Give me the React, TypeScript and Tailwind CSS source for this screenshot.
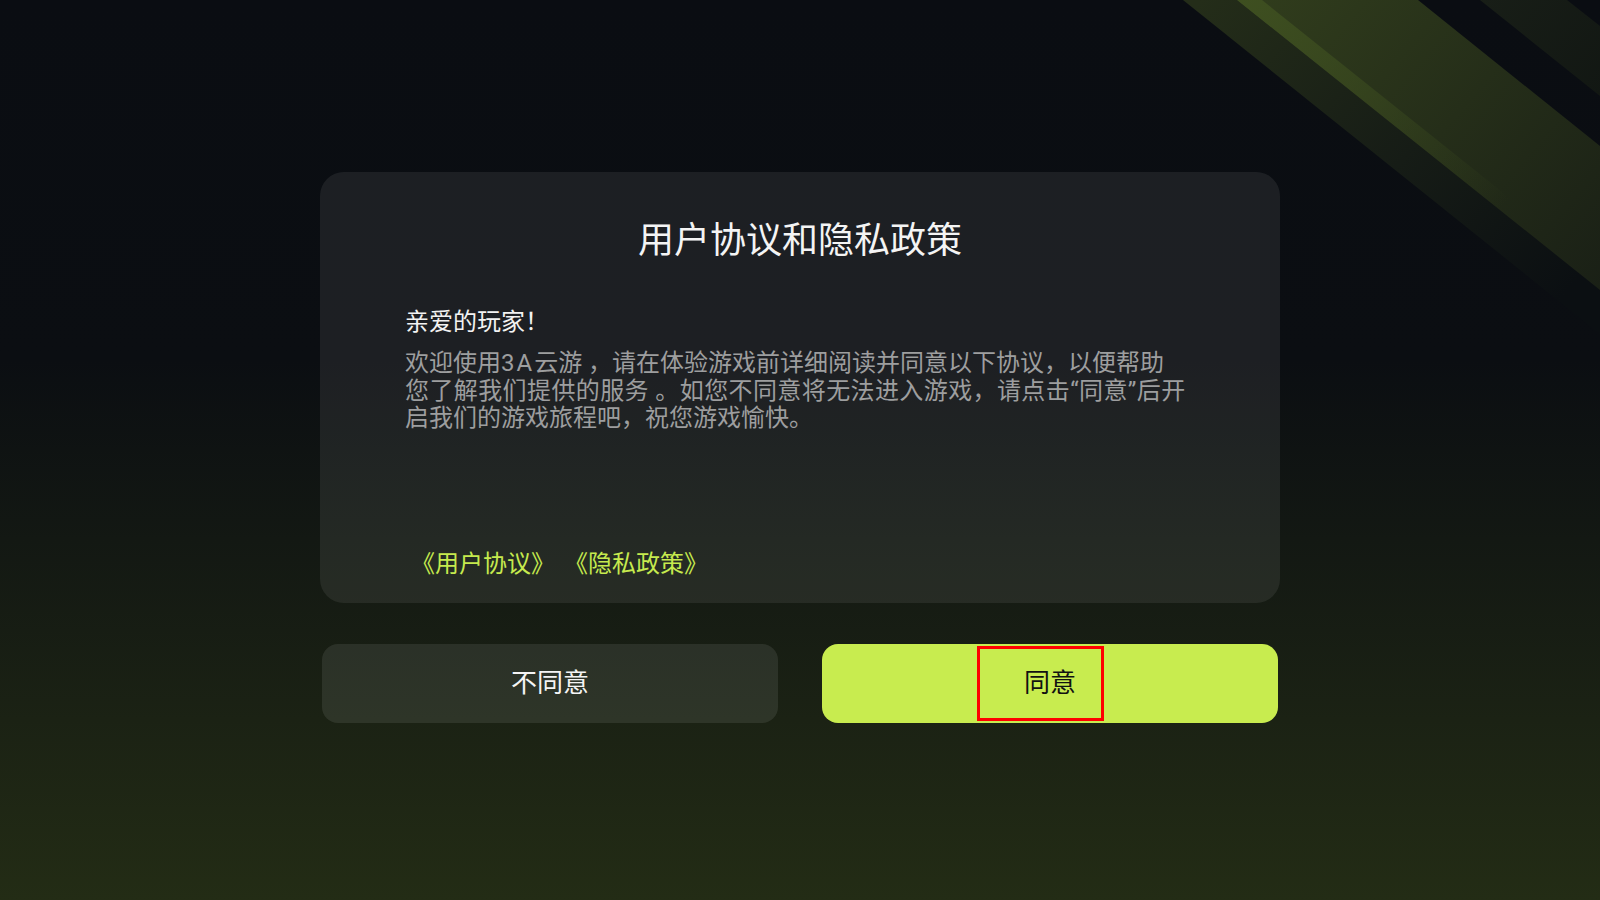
import React from "react";

function Stripes() {
  return (
    <svg
      className="pointer-events-none absolute inset-0"
      width="1600"
      height="900"
      viewBox="0 0 1600 900"
      fill="none"
    >
      <defs>
        <linearGradient id="bandA" gradientUnits="userSpaceOnUse" x1="1200" y1="0" x2="1560" y2="300">
          <stop offset="0" stopColor="#242d19" />
          <stop offset="0.55" stopColor="#161c16" />
          <stop offset="1" stopColor="#0b0f12" />
        </linearGradient>
        <linearGradient id="bandB" gradientUnits="userSpaceOnUse" x1="1260" y1="0" x2="1600" y2="290">
          <stop offset="0" stopColor="#303c1c" />
          <stop offset="0.5" stopColor="#252e19" />
          <stop offset="1" stopColor="#1a2016" />
        </linearGradient>
        <linearGradient id="edgeB" gradientUnits="userSpaceOnUse" x1="1237" y1="0" x2="1500" y2="210">
          <stop offset="0" stopColor="#3e4f20" />
          <stop offset="1" stopColor="#3e4f20" stopOpacity="0" />
        </linearGradient>
        <linearGradient id="bandC" gradientUnits="userSpaceOnUse" x1="1480" y1="0" x2="1600" y2="100">
          <stop offset="0" stopColor="#181e17" />
          <stop offset="1" stopColor="#121713" />
        </linearGradient>
      </defs>
      {/* wide dim band */}
      <polygon points="1183,0 1237,0 1600,290 1600,334" fill="url(#bandA)" />
      {/* main band */}
      <polygon points="1237,0 1418,0 1600,146 1600,290" fill="url(#bandB)" />
      {/* bright edge */}
      <polygon points="1237,0 1262,0 1600,270 1600,290" fill="url(#edgeB)" />
      {/* small band */}
      <polygon points="1480,0 1567,0 1600,26 1600,96" fill="url(#bandC)" />
    </svg>
  );
}

export default function App() {
  return (
    <div className="relative h-[900px] w-full overflow-hidden bg-[linear-gradient(180deg,#0a0d12_0%,#0b0e12_40%,#232c15_100%)] font-['Roboto','Noto_Sans_CJK_SC',sans-serif]">
      <Stripes />

      <div className="relative flex flex-col items-center pt-[172px]">
        {/* Dialog */}
        <div className="flex h-[431px] w-[960px] flex-col rounded-3xl bg-white/[0.075] px-[85px] pb-[23px] pt-[47px]">
          <h1 className="text-center text-[36px] leading-[44px] font-normal text-[#f4f4f4]">
            用户协议和隐私政策
          </h1>

          <p className="mt-[43px] text-[24px] leading-[32px] text-[#f2f2f2]">亲爱的玩家！</p>
          <p className="mt-[12px] text-[24px] leading-[27.5px] text-[#9d9e9f]">
            欢迎使用<span className="tracking-[2px]">3A</span>云游 ，请在体验游戏前详细阅读并同意以下协议，以便帮助
            <br />
            <span className="tracking-[0.4px]">您了解我们提供的服务 。如您不同意将无法进入游戏，请点击“同意”后开</span>
            <br />
            启我们的游戏旅程吧，祝您游戏愉快。
          </p>

          <div className="mt-auto ml-[6px] flex gap-[9px] text-[24px] leading-[32px] text-[#c6ea4e]">
            <span>《用户协议》</span>
            <span>《隐私政策》</span>
          </div>
        </div>

        {/* Buttons */}
        <div className="mt-[41px] flex w-[956px] gap-[44px]">
          <button className="flex h-[79px] flex-1 items-center justify-center rounded-2xl bg-white/[0.085] text-[26px] text-[#f4f4f4]">
            不同意
          </button>
          <button className="relative flex h-[79px] flex-1 items-center justify-center rounded-2xl bg-[#c8ec4f] text-[26px] text-[#111111]">
            同意
            <span className="pointer-events-none absolute left-[155px] top-[2px] h-[75px] w-[127px] border-[3px] border-[#ff0000]" />
          </button>
        </div>
      </div>
    </div>
  );
}
